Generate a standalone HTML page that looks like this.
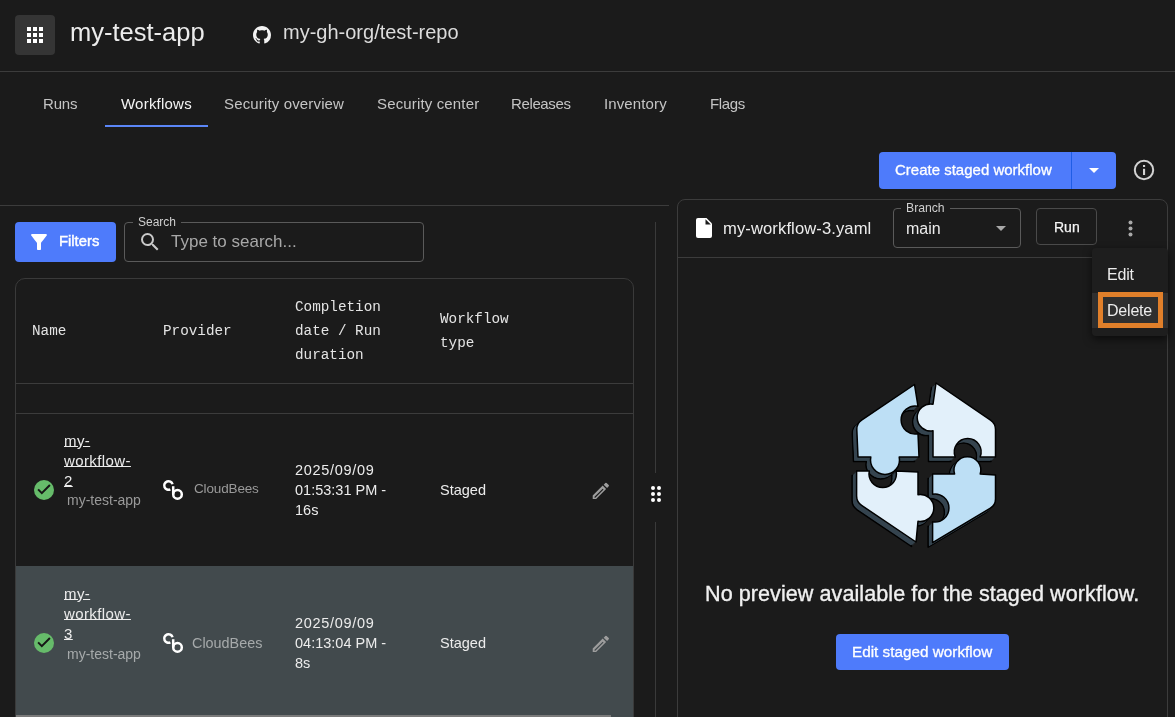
<!DOCTYPE html>
<html><head><meta charset="utf-8">
<style>
*{box-sizing:border-box;margin:0;padding:0}
html,body{width:1175px;height:717px;overflow:hidden;background:#1b1b1b;font-family:"Liberation Sans",sans-serif;color:#e6e6e6}
.a{position:absolute;white-space:nowrap;will-change:transform}
.line{position:absolute;background:#3c3c3c}
.mono{font-family:"Liberation Mono",monospace}
</style></head><body>

<!-- top header -->
<div class="a" style="left:15px;top:15px;width:40px;height:40px;border-radius:4px;background:#353535"></div>
<svg class="a" style="left:27px;top:27px" width="16" height="16" viewBox="0 0 16 16" fill="#fff">
<rect x="0" y="0" width="4" height="4"/><rect x="6" y="0" width="4" height="4"/><rect x="12" y="0" width="4" height="4"/>
<rect x="0" y="6" width="4" height="4"/><rect x="6" y="6" width="4" height="4"/><rect x="12" y="6" width="4" height="4"/>
<rect x="0" y="12" width="4" height="4"/><rect x="6" y="12" width="4" height="4"/><rect x="12" y="12" width="4" height="4"/>
</svg>
<div class="a" id="title" style="left:70px;top:17px;font-size:25.5px;line-height:30px;color:#ececec">my-test-app</div>
<svg class="a" style="left:253px;top:26px" width="18" height="18" viewBox="0 0 16 16"><path fill="#f2f2f2" d="M8 0C3.58 0 0 3.58 0 8c0 3.54 2.29 6.53 5.47 7.59.4.07.55-.17.55-.38 0-.19-.01-.82-.01-1.49-2.01.37-2.53-.49-2.69-.94-.09-.23-.48-.94-.82-1.13-.28-.15-.68-.52-.01-.53.63-.01 1.08.58 1.23.82.72 1.21 1.87.87 2.33.66.07-.52.28-.87.51-1.07-1.78-.2-3.640-.89-3.64-3.95 0-.87.31-1.59.82-2.15-.08-.2-.36-1.02.08-2.12 0 0 .67-.21 2.2.82.64-.18 1.32-.27 2-.27.68 0 1.36.09 2 .27 1.53-1.04 2.2-.82 2.2-.82.44 1.1.16 1.92.08 2.12.51.56.82 1.27.82 2.15 0 3.07-1.87 3.75-3.650 3.95.29.25.54.73.54 1.48 0 1.07-.01 1.93-.01 2.2 0 .21.15.46.55.38A8.013 8.013 0 0016 8c0-4.42-3.58-8-8-8z"/></svg>
<div class="a" id="repo" style="left:283px;top:20px;font-size:20px;line-height:24px;color:#dcdcdc">my-gh-org/test-repo</div>
<div class="line" style="left:0;top:71px;width:1175px;height:1px"></div>

<!-- tabs -->
<div class="a tab" style="left:43px;top:95px;font-size:15px;line-height:18px;color:#c4c4c4;letter-spacing:-0.15px">Runs</div>
<div class="a tab" style="left:121px;top:95px;font-size:15px;line-height:18px;color:#f4f4f4;letter-spacing:0.22px">Workflows</div>
<div class="a" style="left:105px;top:125px;width:103px;height:2px;background:#5b86f7"></div>
<div class="a tab" style="left:224px;top:95px;font-size:15px;line-height:18px;color:#c4c4c4;letter-spacing:0.15px">Security overview</div>
<div class="a tab" style="left:376.5px;top:95px;font-size:15px;line-height:18px;color:#c4c4c4;letter-spacing:0.15px">Security center</div>
<div class="a tab" style="left:511px;top:95px;font-size:15px;line-height:18px;color:#c4c4c4;letter-spacing:-0.37px">Releases</div>
<div class="a tab" style="left:603.5px;top:95px;font-size:15px;line-height:18px;color:#c4c4c4;letter-spacing:0.12px">Inventory</div>
<div class="a tab" style="left:709.5px;top:95px;font-size:15px;line-height:18px;color:#c4c4c4;letter-spacing:-0.34px">Flags</div>

<!-- create staged workflow button -->
<div class="a" style="left:879px;top:152px;width:237px;height:37px;border-radius:4px;background:#4e7bfb"></div>
<div class="a" style="left:1071px;top:152px;width:1px;height:37px;background:#1f5de6"></div>
<div class="a" id="create" style="left:895px;top:161px;font-size:15px;line-height:18px;color:#fff;-webkit-text-stroke:0.3px #fff">Create staged workflow</div>
<svg class="a" style="left:1089px;top:168px" width="10" height="5" viewBox="0 0 10 5"><path d="M0 0h10L5 5z" fill="#fff"/></svg>
<svg class="a" style="left:1133px;top:159px" width="22" height="22" viewBox="0 0 22 22"><circle cx="11" cy="11" r="9.2" fill="none" stroke="#d2d2d2" stroke-width="2"/><rect x="10" y="9.8" width="2.1" height="6.2" fill="#d2d2d2"/><rect x="10" y="6" width="2.1" height="2" fill="#d2d2d2"/></svg>

<!-- left panel -->
<div class="line" style="left:0;top:205px;width:669px;height:1px"></div>
<div class="a" style="left:15px;top:222px;width:101px;height:40px;border-radius:4px;background:#4e7bfb"></div>
<svg class="a" style="left:27px;top:230px" width="24" height="24" viewBox="0 0 24 24"><path fill="#fff" d="M4.25 5.61C6.27 8.2 10 13 10 13v6c0 .55.45 1 1 1h2c.55 0 1-.45 1-1v-6s3.72-4.8 5.74-7.39c.51-.66.04-1.61-.79-1.61H5.04c-.83 0-1.3.95-.79 1.61z"/></svg>
<div class="a" id="filters" style="left:59px;top:231.5px;font-size:14.8px;line-height:18px;color:#fff;-webkit-text-stroke:0.45px #fff">Filters</div>
<div class="a" style="left:124px;top:222px;width:300px;height:40px;border:1px solid #5a5a5a;border-radius:4px"></div>
<div class="a" style="left:133px;top:215px;height:14px;padding:0 5px;background:#1b1b1b;font-size:12px;line-height:14px;color:#cfcfcf">Search</div>
<svg class="a" style="left:138px;top:230px" width="24" height="24" viewBox="0 0 24 24"><path fill="#c9c9c9" d="M15.5 14h-.79l-.28-.27A6.471 6.471 0 0 0 16 9.5 6.5 6.5 0 1 0 9.5 16c1.61 0 3.09-.59 4.23-1.57l.27.28v.79l5 4.99L20.49 19l-4.99-5zm-6 0C7.01 14 5 11.99 5 9.5S7.01 5 9.5 5 14 7.01 14 9.5 11.99 14 9.5 14z"/></svg>
<div class="a" id="ph" style="left:171px;top:232px;font-size:17px;line-height:20px;color:#a8a8a8">Type to search...</div>

<!-- table card -->
<div class="a" style="left:15px;top:278px;width:619px;height:460px;border:1px solid #3a3a3a;border-radius:10px"></div>
<div class="a mono" style="left:32px;top:321.5px;font-size:14.3px;line-height:18px;color:#e4e4e4">Name</div>
<div class="a mono" style="left:163px;top:321.5px;font-size:14.3px;line-height:18px;color:#e4e4e4">Provider</div>
<div class="a mono" style="left:295px;top:294.5px;font-size:14.3px;line-height:24px;color:#e4e4e4;white-space:normal;width:120px">Completion<br>date / Run<br>duration</div>
<div class="a mono" style="left:440px;top:306.5px;font-size:14.3px;line-height:24px;color:#e4e4e4;white-space:normal;width:120px">Workflow<br>type</div>
<div class="line" style="left:16px;top:383px;width:617px;height:1px"></div>
<div class="line" style="left:16px;top:413px;width:617px;height:1px"></div>


<!-- rows -->
<div class="a" style="left:16px;top:566px;width:617px;height:151px;background:#424a4d"></div>
<div class="a" style="left:16px;top:715px;width:595px;height:2px;background:#7a7a7a"></div>
<div class="line" style="left:655px;top:222px;width:1px;height:251px;background:#3a3a3a"></div>
<div class="line" style="left:655px;top:522px;width:1px;height:195px;background:#3a3a3a"></div>
<svg class="a" style="left:650px;top:485px" width="12" height="18" viewBox="0 0 12 18" fill="#fff"><circle cx="3" cy="3" r="2"/><circle cx="9" cy="3" r="2"/><circle cx="3" cy="9" r="2"/><circle cx="9" cy="9" r="2"/><circle cx="3" cy="15" r="2"/><circle cx="9" cy="15" r="2"/></svg>
<svg class="a" style="left:34px;top:480px" width="20" height="20" viewBox="0 0 20 20"><circle cx="10" cy="10" r="10" fill="#66bb6a"/><path d="M4.1 9.4L7.8 13.1L15.9 5" fill="none" stroke="#161616" stroke-width="2"/></svg>
<div class="a wf" style="left:64px;top:431px;font-size:15px;line-height:20px;color:#ececec;text-decoration:underline;text-underline-offset:0px;white-space:normal;width:90px;letter-spacing:0.4px">my-<br>workflow-<br>2</div>
<div class="a app" style="left:67px;top:491px;font-size:14px;line-height:18px;color:#9a9a9a">my-test-app</div>
<svg class="a" style="left:158px;top:475px" width="30" height="30" viewBox="0 0 30 30"><path d="M14.55 9.25A4.25 4.25 0 1 0 12.36 14.3" fill="none" stroke="#fff" stroke-width="2.5"/><path d="M15.2 11.2V19.4" stroke="#fff" stroke-width="2.5"/><circle cx="19.5" cy="19.4" r="4.3" fill="none" stroke="#fff" stroke-width="2.5"/></svg>
<div class="a cb" style="left:193.5px;top:480px;letter-spacing:-0.15px;font-size:13.5px;line-height:18px;color:#9a9a9a">CloudBees</div>
<div class="a dt" style="left:295px;top:460px;font-size:14.5px;line-height:20px;color:#ececec;white-space:normal;width:110px"><span style="letter-spacing:0.7px">2025/09/09</span><br>01:53:31 PM -<br>16s</div>
<div class="a st" style="left:440px;top:481px;font-size:14.5px;line-height:18px;color:#ececec">Staged</div>
<svg class="a" style="left:590.3px;top:479.6px" width="21.7" height="21.7" viewBox="0 0 24 24"><path fill="#9d9d9d" d="M3 17.25V21h3.75L17.81 9.94l-3.75-3.75L3 17.25zm2.92 2.33H5v-.92l9.06-9.06.92.92L5.92 19.58zM20.71 7.04a.996.996 0 0 0 0-1.41l-2.34-2.34a.996.996 0 0 0-1.41 0l-1.83 1.83 3.75 3.75 1.83-1.83z"/></svg>
<svg class="a" style="left:34px;top:633px" width="20" height="20" viewBox="0 0 20 20"><circle cx="10" cy="10" r="10" fill="#66bb6a"/><path d="M4.1 9.4L7.8 13.1L15.9 5" fill="none" stroke="#161616" stroke-width="2"/></svg>
<div class="a wf" style="left:64px;top:584px;font-size:15px;line-height:20px;color:#ececec;text-decoration:underline;text-underline-offset:0px;white-space:normal;width:90px;letter-spacing:0.4px">my-<br>workflow-<br>3</div>
<div class="a app" style="left:67px;top:644.5px;font-size:14px;line-height:18px;color:#a6aaab">my-test-app</div>
<svg class="a" style="left:158px;top:628px" width="30" height="30" viewBox="0 0 30 30"><path d="M14.55 9.25A4.25 4.25 0 1 0 12.36 14.3" fill="none" stroke="#fff" stroke-width="2.5"/><path d="M15.2 11.2V19.4" stroke="#fff" stroke-width="2.5"/><circle cx="19.5" cy="19.4" r="4.3" fill="none" stroke="#fff" stroke-width="2.5"/></svg>
<div class="a cb" style="left:191.5px;top:634px;font-size:14.4px;line-height:18px;color:#a6aaab">CloudBees</div>
<div class="a dt" style="left:295px;top:613px;font-size:14.5px;line-height:20px;color:#ececec;white-space:normal;width:110px"><span style="letter-spacing:0.7px">2025/09/09</span><br>04:13:04 PM -<br>8s</div>
<div class="a st" style="left:440px;top:634px;font-size:14.5px;line-height:18px;color:#ececec">Staged</div>
<svg class="a" style="left:590.3px;top:632.6px" width="21.7" height="21.7" viewBox="0 0 24 24"><path fill="#9d9d9d" d="M3 17.25V21h3.75L17.81 9.94l-3.75-3.75L3 17.25zm2.92 2.33H5v-.92l9.06-9.06.92.92L5.92 19.58zM20.71 7.04a.996.996 0 0 0 0-1.41l-2.34-2.34a.996.996 0 0 0-1.41 0l-1.83 1.83 3.75 3.75 1.83-1.83z"/></svg>

<!-- right panel -->
<div class="a" style="left:677px;top:199px;width:491px;height:560px;border:1px solid #3c3c3c;border-radius:8px"></div>
<div class="line" style="left:678px;top:257px;width:489px;height:1px;background:#3c3c3c"></div>
<svg class="a" style="left:696px;top:218px" width="16" height="20" viewBox="0 0 16 20"><path d="M2 0h8.5L16 5.5V18a2 2 0 0 1-2 2H2a2 2 0 0 1-2-2V2a2 2 0 0 1 2-2z" fill="#fff"/><path d="M9.5 1.2v5.3h5.3z" fill="#1b1b1b"/></svg>
<div class="a" id="fname" style="left:722.5px;top:219px;letter-spacing:0.1px;font-size:16.6px;line-height:20px;color:#ececec">my-workflow-3.yaml</div>
<div class="a" style="left:893px;top:208px;width:128px;height:40px;border:1px solid #5a5a5a;border-radius:4px"></div>
<div class="a" style="left:901px;top:201px;height:14px;padding:0 5px;background:#1b1b1b;font-size:12.2px;line-height:14px;color:#cfcfcf">Branch</div>
<div class="a" id="main" style="left:906px;top:219px;font-size:16px;line-height:20px;color:#ececec">main</div>
<svg class="a" style="left:996px;top:226px" width="10" height="5" viewBox="0 0 10 5"><path d="M0 0h10L5 5z" fill="#a8a8a8"/></svg>
<div class="a" style="left:1036px;top:208px;width:61px;height:37px;border:1px solid #4a4a4a;border-radius:4px"></div>
<div class="a" id="run" style="left:1054px;top:217.5px;font-size:14px;line-height:18px;color:#f4f4f4;-webkit-text-stroke:0.25px #f4f4f4">Run</div>
<svg class="a" style="left:1128px;top:220px" width="5" height="17" viewBox="0 0 5 17" fill="#a9a9a9"><circle cx="2.5" cy="2.5" r="2"/><circle cx="2.5" cy="8.5" r="2"/><circle cx="2.5" cy="14.5" r="2"/></svg>

<!-- menu -->
<div class="a" style="left:1092px;top:248px;width:76px;height:88px;background:#1e1e1e;border-radius:4px;box-shadow:0 3px 8px rgba(0,0,0,0.6)"></div>
<div class="a" id="edit" style="left:1107px;top:266px;letter-spacing:-0.2px;font-size:16px;line-height:18px;color:#ececec">Edit</div>
<div class="a" style="left:1092px;top:293px;width:76px;height:35px;background:#2f2f2f"></div>
<div class="a" style="left:1098px;top:292px;width:65px;height:36px;border:5px solid #e07f2a"></div>
<div class="a" id="del" style="left:1107px;top:301.5px;letter-spacing:-0.2px;font-size:16px;line-height:18px;color:#ececec">Delete</div>

<!-- puzzle -->
<svg class="a" style="left:840px;top:375px" width="170" height="180" viewBox="840 375 170 180">
<g transform="translate(-4.5 4.5)" fill="#35444f" stroke="#000" stroke-width="1.5" stroke-linejoin="round"><path d="M861.6 420.2 L914.5 384.5 L918 406.3 A14 14 0 1 0 918 433.7 L919 457 L899.2 457 A14.5 14.5 0 1 1 870.8 457 L858 457 L856.8 429.5 Q856.6 423.5 861.6 420.2 Z"/><path d="M936 383 L990.5 420.1 Q995.5 423.5 995.5 429.5 L995.5 457 L980.1 457 A13.4 13.4 0 1 0 955.3 457 L933 457 L933 430.8 A13.5 13.5 0 1 1 933 404.2 Z"/><path d="M856.6 471 L869.3 471 A13.7 13.7 0 1 0 896.1 471 L918 472 L918 494.7 A13.5 13.5 0 1 1 918 521.3 L916 542 L861.6 505.3 Q856.6 502 856.6 496 Z"/><path d="M932.6 474 L954.6 474 A13.4 13.4 0 1 1 980.2 474 L995.5 475 L995.5 499 Q995.5 505 990.4 508.1 L932.6 542.6 L932.6 521.8 A14 14 0 1 0 932.6 494.2 Z"/></g>
<g transform="translate(-3.6 3.6)" fill="#35444f"><path d="M861.6 420.2 L914.5 384.5 L918 406.3 A14 14 0 1 0 918 433.7 L919 457 L899.2 457 A14.5 14.5 0 1 1 870.8 457 L858 457 L856.8 429.5 Q856.6 423.5 861.6 420.2 Z"/><path d="M936 383 L990.5 420.1 Q995.5 423.5 995.5 429.5 L995.5 457 L980.1 457 A13.4 13.4 0 1 0 955.3 457 L933 457 L933 430.8 A13.5 13.5 0 1 1 933 404.2 Z"/><path d="M856.6 471 L869.3 471 A13.7 13.7 0 1 0 896.1 471 L918 472 L918 494.7 A13.5 13.5 0 1 1 918 521.3 L916 542 L861.6 505.3 Q856.6 502 856.6 496 Z"/><path d="M932.6 474 L954.6 474 A13.4 13.4 0 1 1 980.2 474 L995.5 475 L995.5 499 Q995.5 505 990.4 508.1 L932.6 542.6 L932.6 521.8 A14 14 0 1 0 932.6 494.2 Z"/></g>
<g transform="translate(-2.7 2.7)" fill="#35444f"><path d="M861.6 420.2 L914.5 384.5 L918 406.3 A14 14 0 1 0 918 433.7 L919 457 L899.2 457 A14.5 14.5 0 1 1 870.8 457 L858 457 L856.8 429.5 Q856.6 423.5 861.6 420.2 Z"/><path d="M936 383 L990.5 420.1 Q995.5 423.5 995.5 429.5 L995.5 457 L980.1 457 A13.4 13.4 0 1 0 955.3 457 L933 457 L933 430.8 A13.5 13.5 0 1 1 933 404.2 Z"/><path d="M856.6 471 L869.3 471 A13.7 13.7 0 1 0 896.1 471 L918 472 L918 494.7 A13.5 13.5 0 1 1 918 521.3 L916 542 L861.6 505.3 Q856.6 502 856.6 496 Z"/><path d="M932.6 474 L954.6 474 A13.4 13.4 0 1 1 980.2 474 L995.5 475 L995.5 499 Q995.5 505 990.4 508.1 L932.6 542.6 L932.6 521.8 A14 14 0 1 0 932.6 494.2 Z"/></g>
<g transform="translate(-1.8 1.8)" fill="#35444f"><path d="M861.6 420.2 L914.5 384.5 L918 406.3 A14 14 0 1 0 918 433.7 L919 457 L899.2 457 A14.5 14.5 0 1 1 870.8 457 L858 457 L856.8 429.5 Q856.6 423.5 861.6 420.2 Z"/><path d="M936 383 L990.5 420.1 Q995.5 423.5 995.5 429.5 L995.5 457 L980.1 457 A13.4 13.4 0 1 0 955.3 457 L933 457 L933 430.8 A13.5 13.5 0 1 1 933 404.2 Z"/><path d="M856.6 471 L869.3 471 A13.7 13.7 0 1 0 896.1 471 L918 472 L918 494.7 A13.5 13.5 0 1 1 918 521.3 L916 542 L861.6 505.3 Q856.6 502 856.6 496 Z"/><path d="M932.6 474 L954.6 474 A13.4 13.4 0 1 1 980.2 474 L995.5 475 L995.5 499 Q995.5 505 990.4 508.1 L932.6 542.6 L932.6 521.8 A14 14 0 1 0 932.6 494.2 Z"/></g>
<g transform="translate(-0.9 0.9)" fill="#35444f"><path d="M861.6 420.2 L914.5 384.5 L918 406.3 A14 14 0 1 0 918 433.7 L919 457 L899.2 457 A14.5 14.5 0 1 1 870.8 457 L858 457 L856.8 429.5 Q856.6 423.5 861.6 420.2 Z"/><path d="M936 383 L990.5 420.1 Q995.5 423.5 995.5 429.5 L995.5 457 L980.1 457 A13.4 13.4 0 1 0 955.3 457 L933 457 L933 430.8 A13.5 13.5 0 1 1 933 404.2 Z"/><path d="M856.6 471 L869.3 471 A13.7 13.7 0 1 0 896.1 471 L918 472 L918 494.7 A13.5 13.5 0 1 1 918 521.3 L916 542 L861.6 505.3 Q856.6 502 856.6 496 Z"/><path d="M932.6 474 L954.6 474 A13.4 13.4 0 1 1 980.2 474 L995.5 475 L995.5 499 Q995.5 505 990.4 508.1 L932.6 542.6 L932.6 521.8 A14 14 0 1 0 932.6 494.2 Z"/></g>
<g stroke="#000" stroke-width="1.5" stroke-linejoin="round"><path d="M861.6 420.2 L914.5 384.5 L918 406.3 A14 14 0 1 0 918 433.7 L919 457 L899.2 457 A14.5 14.5 0 1 1 870.8 457 L858 457 L856.8 429.5 Q856.6 423.5 861.6 420.2 Z" fill="#bddff5"/><path d="M936 383 L990.5 420.1 Q995.5 423.5 995.5 429.5 L995.5 457 L980.1 457 A13.4 13.4 0 1 0 955.3 457 L933 457 L933 430.8 A13.5 13.5 0 1 1 933 404.2 Z" fill="#e2f0fa"/><path d="M856.6 471 L869.3 471 A13.7 13.7 0 1 0 896.1 471 L918 472 L918 494.7 A13.5 13.5 0 1 1 918 521.3 L916 542 L861.6 505.3 Q856.6 502 856.6 496 Z" fill="#e2f0fa"/><path d="M932.6 474 L954.6 474 A13.4 13.4 0 1 1 980.2 474 L995.5 475 L995.5 499 Q995.5 505 990.4 508.1 L932.6 542.6 L932.6 521.8 A14 14 0 1 0 932.6 494.2 Z" fill="#bddff5"/></g></svg>
<!-- empty state -->
<div class="a" id="nop" style="left:705px;top:581.5px;letter-spacing:0.05px;font-size:21.6px;line-height:24px;color:#f0f0f0;-webkit-text-stroke:0.35px #f0f0f0">No preview available for the staged workflow.</div>
<div class="a" style="left:836px;top:634px;width:173px;height:36px;border-radius:4px;background:#4e7bfb"></div>
<div class="a" id="edsw" style="left:852px;top:643px;font-size:15.3px;line-height:18px;color:#fff;-webkit-text-stroke:0.3px #fff">Edit staged workflow</div>
</body></html>
